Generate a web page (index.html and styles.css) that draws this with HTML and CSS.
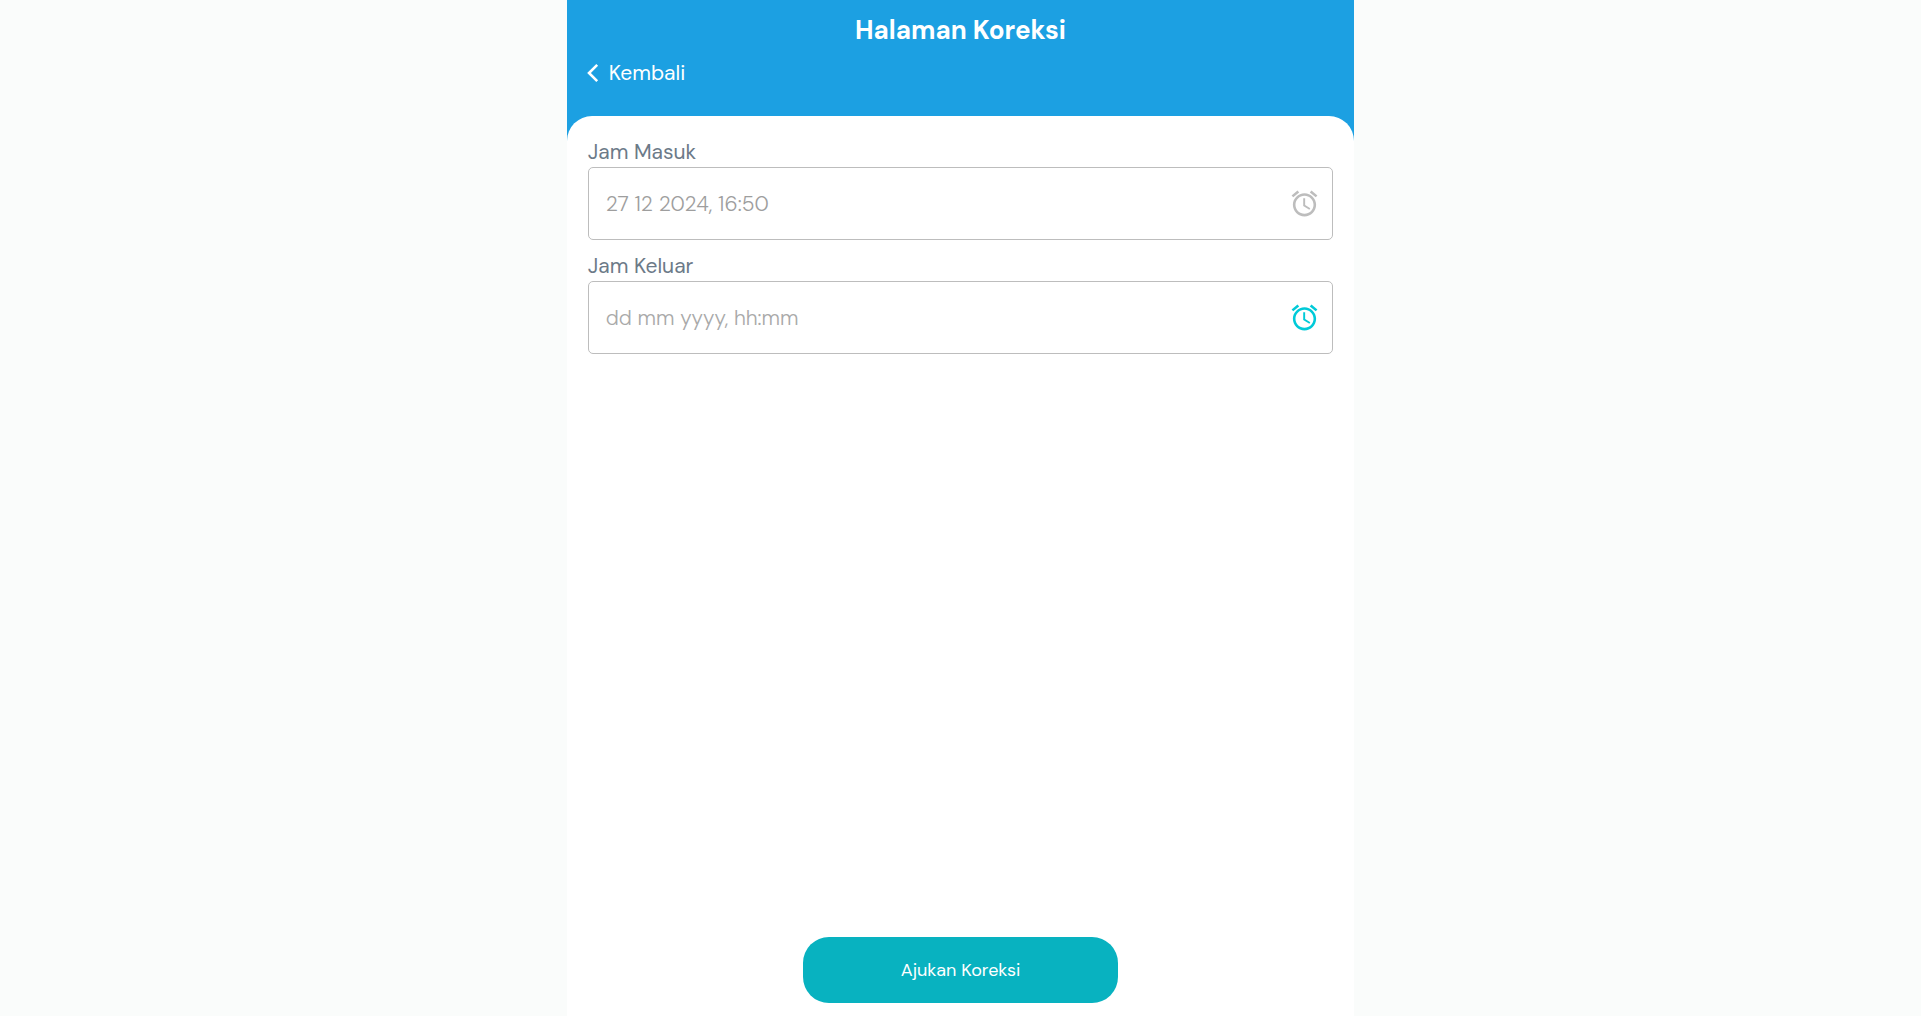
FILE: index.html
```html
<!DOCTYPE html>
<html lang="id">
<head>
<meta charset="utf-8">
<meta name="viewport" content="width=device-width, initial-scale=1">
<title>Halaman Koreksi</title>
<link rel="stylesheet" href="styles.css">
</head>
<body>
<div class="app">
  <header class="header">
    <h1 class="title">Halaman Koreksi</h1>
    <a class="back" href="#">
      <svg class="back-icon" viewBox="0 0 12 20" aria-hidden="true"><path d="M10.2 1.8 2 10l8.2 8.2"/></svg>
      <span>Kembali</span>
    </a>
  </header>
  <main class="card">
    <form class="form">
      <div class="field">
        <label class="label" for="masuk">Jam Masuk</label>
        <div class="control control-disabled">
          <input class="input" id="masuk" type="text" value="27 12 2024, 16:50" disabled>
          <svg class="clock" viewBox="0 0 24 24" aria-hidden="true"><path d="m22 5.72-4.6-3.86-1.29 1.53 4.6 3.86zM7.88 3.39 6.6 1.86 2 5.71l1.29 1.53zM12.5 8H11v6l4.75 2.85.75-1.23-4-2.37zM12 4c-4.97 0-9 4.03-9 9s4.02 9 9 9c4.97 0 9-4.03 9-9s-4.03-9-9-9m0 16c-3.87 0-7-3.13-7-7s3.13-7 7-7 7 3.13 7 7-3.13 7-7 7"/></svg>
        </div>
      </div>
      <div class="field">
        <label class="label" for="keluar">Jam Keluar</label>
        <div class="control">
          <input class="input" id="keluar" type="text" placeholder="dd mm yyyy, hh:mm">
          <svg class="clock" viewBox="0 0 24 24" aria-hidden="true"><path d="m22 5.72-4.6-3.86-1.29 1.53 4.6 3.86zM7.88 3.39 6.6 1.86 2 5.71l1.29 1.53zM12.5 8H11v6l4.75 2.85.75-1.23-4-2.37zM12 4c-4.97 0-9 4.03-9 9s4.02 9 9 9c4.97 0 9-4.03 9-9s-4.03-9-9-9m0 16c-3.87 0-7-3.13-7-7s3.13-7 7-7 7 3.13 7 7-3.13 7-7 7"/></svg>
        </div>
      </div>
      <button class="submit" type="submit">Ajukan Koreksi</button>
    </form>
  </main>
</div>
</body>
</html>
```
FILE: styles.css
```css
* {
  box-sizing: border-box;
}

body {
  margin: 0;
  background: #fafcfb;
  font-family: "DM Sans", Inter, sans-serif;
}

.app {
  display: flex;
  flex-direction: column;
  width: 41%;
  min-width: 320px;
  min-height: 100vh;
  margin: 0 auto;
  background: #1ca0e2;
}

.header {
  padding: 12px 20px 29px;
  color: #fff;
}

.title {
  margin: 0 0 11px;
  font-size: 26px;
  line-height: 36px;
  font-weight: 700;
  text-align: center;
}

.back {
  display: flex;
  width: fit-content;
  align-items: center;
  gap: 10px;
  color: inherit;
  font-size: 21px;
  line-height: 28px;
  text-decoration: none;
}

.back-icon {
  width: 12px;
  height: 20px;
  fill: none;
  stroke: currentColor;
  stroke-width: 2.6;
}

.card {
  display: flex;
  flex: 1;
  padding: 22px 0 13px;
  border-radius: 25px 25px 0 0;
  background: #fff;
}

.form {
  display: flex;
  flex: 1;
  flex-direction: column;
}

.field {
  margin: 0 21px 12px;
}

.label {
  display: block;
  margin-bottom: 1px;
  color: #6c7a88;
  font-size: 21px;
  line-height: 28px;
}

.control {
  display: flex;
  height: 73px;
  align-items: center;
  padding: 0 12px 0 17px;
  border: 1px solid #bdbdbd;
  border-radius: 5px;
  color: #00cad8;
}

.control-disabled {
  color: #bdbdbd;
}

.input {
  flex: 1;
  min-width: 0;
  height: 100%;
  padding: 0;
  border: 0;
  outline: 0;
  background: transparent;
  color: #9e9e9e;
  font: 300 21px/28px "DM Sans", Inter, sans-serif;
}

.input::placeholder {
  color: #a9a9a9;
}

.clock {
  width: 31px;
  height: 31px;
  fill: currentColor;
}

.submit {
  width: 40%;
  height: 66px;
  margin: auto auto 0;
  border: 0;
  border-radius: 26px;
  background: #08b2c0;
  color: #fff;
  font: 400 18px/24px "DM Sans", Inter, sans-serif;
}
```
